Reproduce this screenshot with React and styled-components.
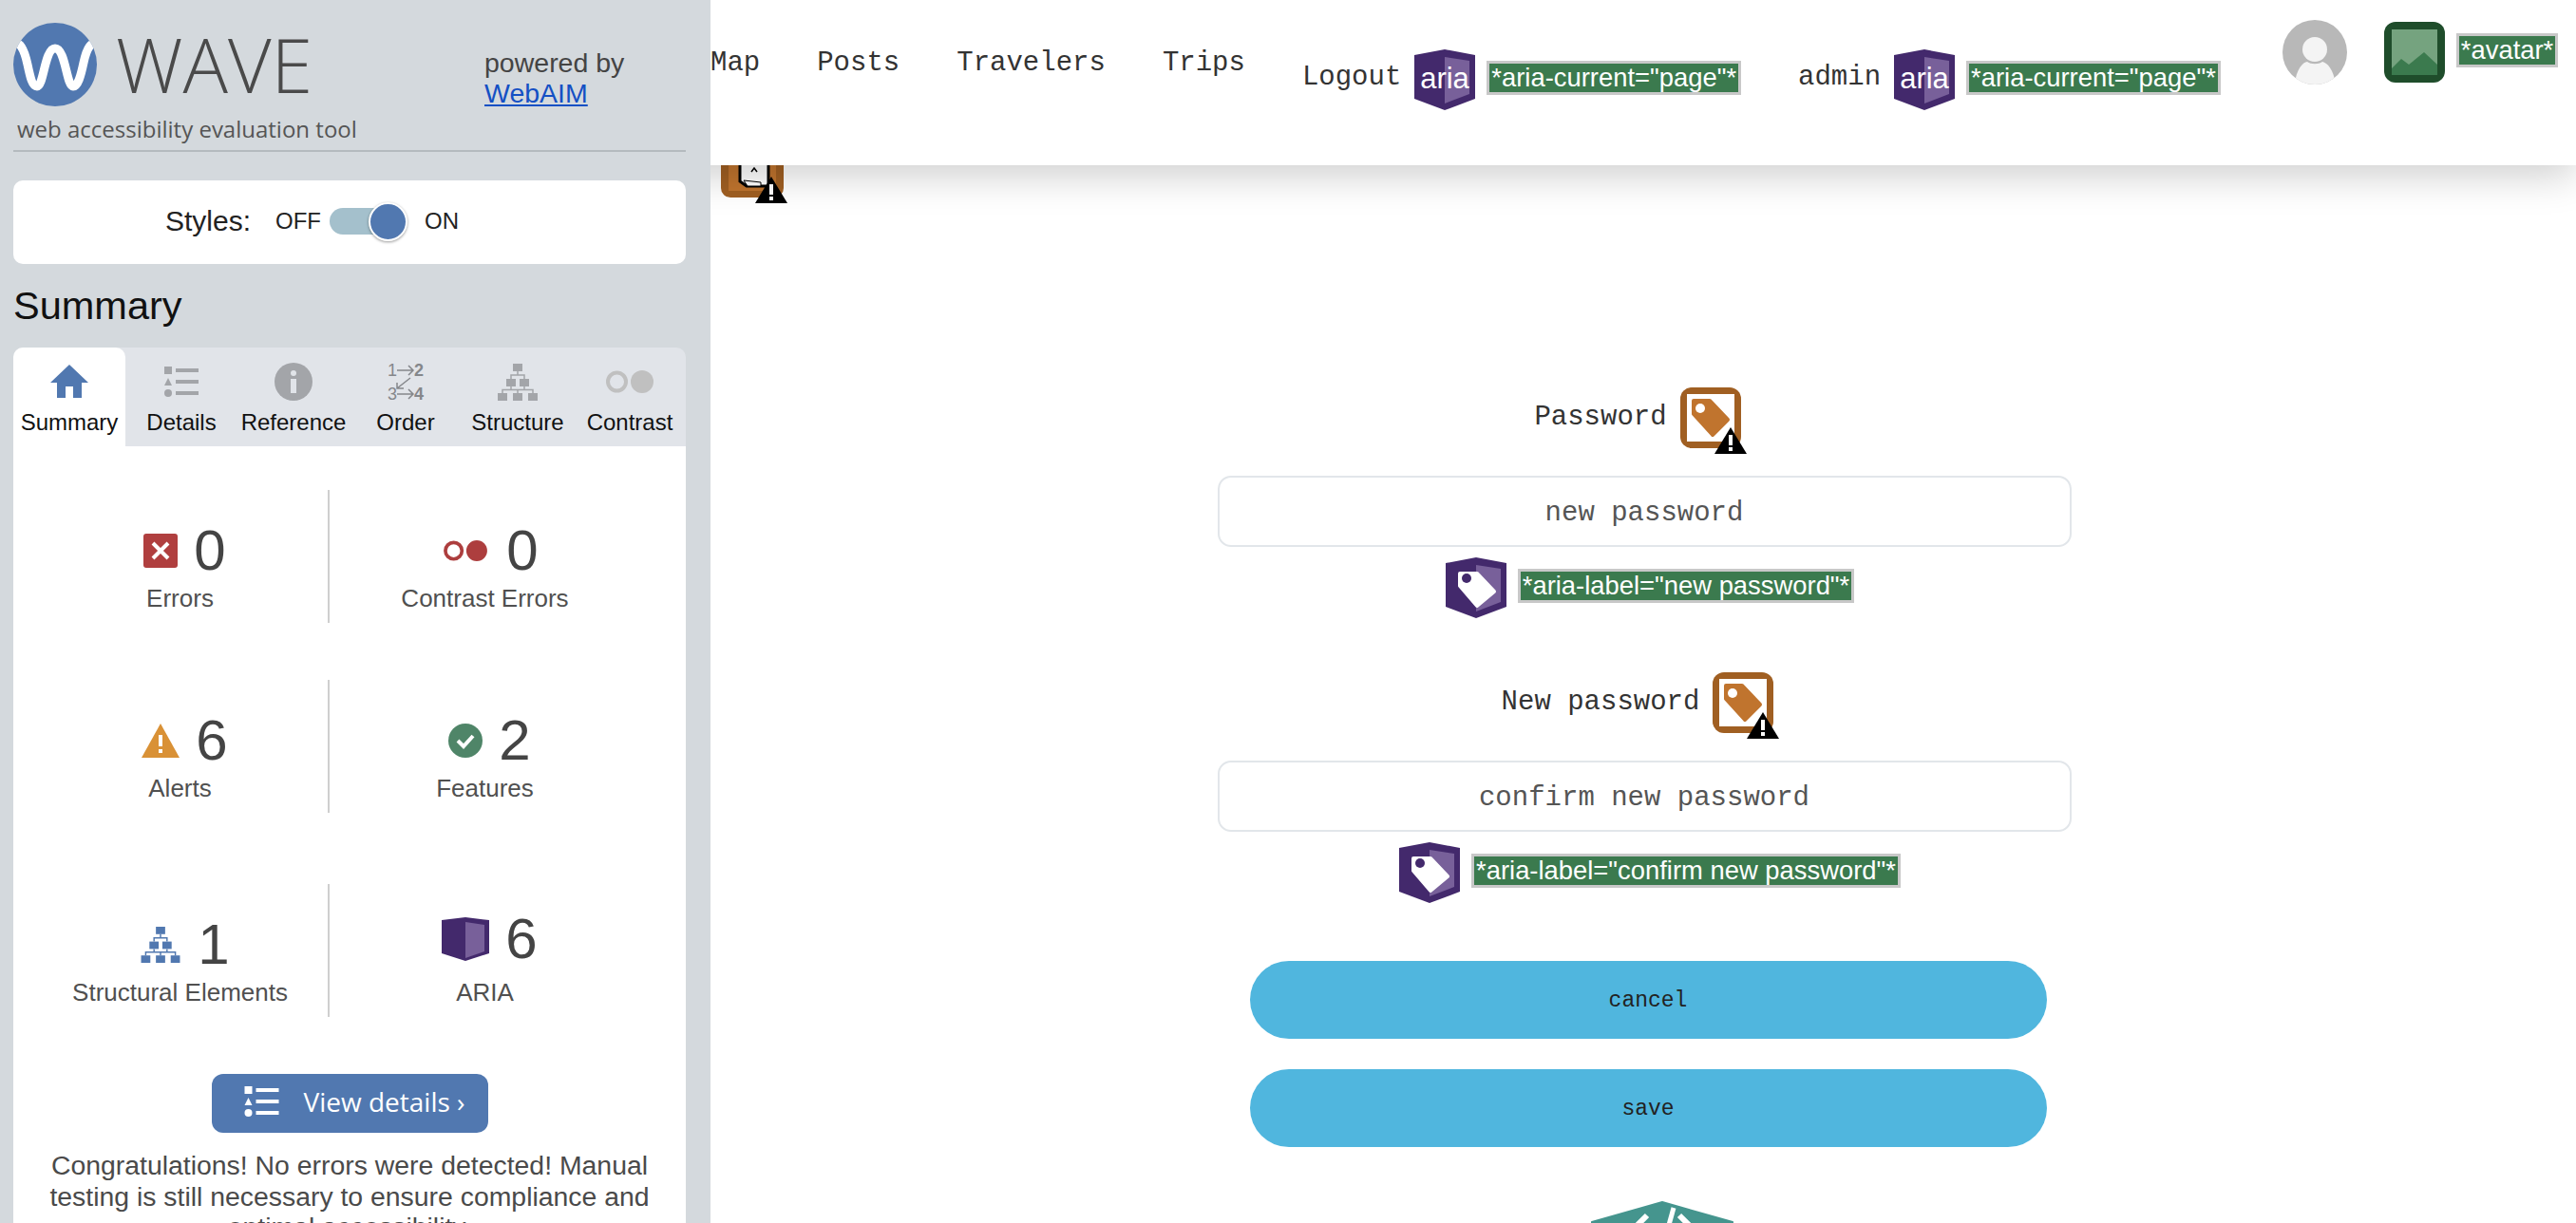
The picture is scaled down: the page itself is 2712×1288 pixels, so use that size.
import React from 'react';
import styled, { createGlobalStyle } from 'styled-components';

const GlobalStyle = createGlobalStyle`
  html, body { margin: 0; padding: 0; background: #fff; }
  * { box-sizing: border-box; }
`;

const Page = styled.div`
  display: flex;
  width: 100%;
  height: 1288px;
  overflow: hidden;
  font-family: "Liberation Sans", Arial, sans-serif;
`;

/* ---- sidebar ---- */
const Sidebar = styled.aside`
  position: relative;
  z-index: 2;
  flex: none;
  width: 748px;
  height: 100%;
  padding: 0 26px 0 14px;
  background: #d4d9dd;
  overflow: hidden;
`;

const Brand = styled.div`
  height: 160px;
  border-bottom: 2px solid #b4babe;
`;

const BrandTop = styled.div`
  display: flex;
  align-items: flex-start;
  height: 100px;
  padding-top: 24px;
`;

const WaveTitle = styled.div`
  width: 388px;
  margin-left: 20px;
  font-family: "Open Sans", sans-serif;
  font-weight: 300;
  font-size: 79px;
  line-height: 88px;
  color: #4a4a4a;
`;

const Powered = styled.div`
  font-size: 28.5px;
  line-height: 32px;
  padding-top: 26px;
  color: #444;
  a { color: #1450c4; display: block; }
`;

const Tagline = styled.div`
  margin: 0 0 0 4px;
  padding-top: 20px;
  font-family: "Open Sans", sans-serif;
  font-size: 24px;
  line-height: 32px;
  color: #555;
`;

const StylesCard = styled.div`
  display: flex;
  align-items: center;
  height: 88px;
  margin-top: 30px;
  padding: 0 0 2px 160px;
  background: #fff;
  border-radius: 10px;
  color: #222;
`;

const StylesLabel = styled.span`
  font-size: 30px;
  margin-right: 26px;
`;

const ToggleWord = styled.span`
  font-size: 24px;
`;

const Track = styled.div`
  position: relative;
  width: 74px;
  height: 28px;
  margin: 0 26px 0 9px;
  border-radius: 14px;
  background: #a4c0cc;
`;

const Knob = styled.div`
  position: absolute;
  top: -6px;
  left: 41px;
  width: 41px;
  height: 41px;
  border-radius: 50%;
  border: 2px solid #fff;
  background: #5178b0;
  box-shadow: 0 1px 3px rgba(0, 0, 0, 0.4);
`;

const Heading = styled.h2`
  display: flex;
  align-items: center;
  height: 88px;
  margin: 0;
  font-weight: 400;
  font-size: 41.5px;
  color: #111;
`;

const Tabs = styled.div`
  display: flex;
  height: 104px;
  background: #e1e4e9;
  border-radius: 10px 10px 0 0;
`;

const Tab = styled.div`
  flex: 1;
  display: flex;
  flex-direction: column;
  align-items: center;
  padding-top: 16px;
  background: ${p => (p.$active ? '#fff' : 'transparent')};
  border-radius: ${p => (p.$active ? '10px 10px 0 0' : '0')};
  color: ${p => (p.$active ? '#5178b0' : '#a3a5a9')};
`;

const TabIconSlot = styled.div`
  display: flex;
  align-items: center;
  justify-content: center;
  height: 40px;
`;

const TabLabel = styled.div`
  margin-top: 9px;
  font-size: 24px;
  line-height: 28px;
  color: #111;
`;

const Panel = styled.div`
  height: 818px;
  padding-top: 46px;
  background: #fff;
  color: #444;
`;

const StatRow = styled.div`
  display: grid;
  grid-template-columns: 313px 327px;
  margin: ${p => p.$top}px 0 0 20px;
`;

const Stat = styled.div`
  display: flex;
  flex-direction: column;
  align-items: center;
  height: 140px;
  padding-top: 34px;
  border-right: ${p => (p.$divided ? '2px solid #cfcfcf' : '0')};
`;

const StatHead = styled.div`
  display: flex;
  align-items: center;
  gap: 17px;
  height: 60px;
  padding: 0 0 ${p => (p.$raised ? '12px' : '0')} 10px;
  font-size: 60px;
  line-height: 60px;
`;

const StatLabel = styled.div`
  margin-top: 5px;
  font-size: 26px;
  line-height: 30px;
  color: #505050;
`;

const DetailsButton = styled.button`
  display: flex;
  align-items: center;
  justify-content: center;
  gap: 24px;
  width: 291px;
  height: 62px;
  margin: 60px 0 0 209px;
  padding: 0 0 4px 9px;
  border: 0;
  border-radius: 12px;
  background: #5178b0;
  color: #fff;
  font-family: "Open Sans", sans-serif;
  font-size: 28px;
`;

const Congrats = styled.p`
  margin: 18px 0 0;
  padding: 0 30px;
  text-align: center;
  font-size: 28.4px;
  line-height: 32.5px;
  color: #4a4a4a;
`;

/* ---- main column ---- */
const Main = styled.main`
  position: relative;
  flex: 1;
  min-width: 0;
  height: 100%;
  overflow: hidden;
  font-family: "Liberation Mono", "Courier New", monospace;
  color: #333;
`;

const TopBar = styled.header`
  position: absolute;
  top: 0;
  left: -60px;
  right: 0;
  z-index: 1;
  display: flex;
  align-items: flex-start;
  height: 174px;
  padding-left: 60px;
  background: #fff;
  box-shadow: 0 10px 40px rgba(0, 0, 0, 0.2);
`;

const NavLinks = styled.nav`
  display: flex;
  gap: 60px;
  margin: 49px 60px 0 0;
  font-size: 29px;
  line-height: 36px;
`;

const Annotated = styled.div`
  display: flex;
  align-items: flex-start;
  margin: 52px ${p => p.$after}px 0 0;
`;

const AccountText = styled.span`
  margin: 12px 14px 0 0;
  font-size: 29px;
  line-height: 36px;
`;

const Tag = styled.span`
  display: block;
  height: 36px;
  margin: 12px 0 0 12px;
  padding: 0 2px;
  border: 3px solid #c8c8c8;
  background: #3b7a4e;
  color: #fff;
  font-family: "Liberation Sans", Arial, sans-serif;
  font-size: 27.4px;
  line-height: 30px;
  white-space: nowrap;
`;

const AvatarSlot = styled.div`
  margin: 21px 39px 0 0;
`;

const AvatarTag = styled.div`
  display: flex;
  align-items: flex-start;
  margin-top: 23px;
`;

const Content = styled.div`
  display: flex;
  flex-direction: column;
  align-items: center;
  padding: 144px 0 0 2px;
`;

const StrayIcon = styled.div`
  align-self: flex-start;
  margin: 0 0 200px 9px;
  height: 64px;
`;

const FieldLabel = styled.label`
  display: flex;
  align-items: center;
  gap: 14px;
  height: 64px;
  padding-right: 14px;
  font-size: 29px;
  line-height: 60px;
`;

const Field = styled.input`
  display: block;
  width: 899px;
  height: 75px;
  margin-top: 29px;
  padding: 3px 0 0;
  border: 2px solid #e2e6ea;
  border-radius: 14px;
  background: #fff;
  outline: none;
  text-align: center;
  font-family: "Liberation Mono", "Courier New", monospace;
  font-size: 29px;
  color: #555;
  &::placeholder { color: #555; opacity: 1; }
`;

const AriaRow = styled.div`
  display: flex;
  align-items: flex-start;
  height: 65px;
  margin: 11px 0 ${p => p.$after}px;
  padding-left: 12px;
`;

const PillButton = styled.button`
  display: block;
  width: 839px;
  height: 82px;
  margin: 0 0 ${p => p.$after}px 8px;
  padding: 2px 0 0;
  border: 0;
  border-radius: 41px;
  background: #50b6de;
  color: #222;
  font-family: "Liberation Mono", "Courier New", monospace;
  font-size: 23px;
`;

const BadgeSlot = styled.div`
  margin-left: 38px;
`;

const Svg = styled.svg`
  display: block;
  flex: none;
  overflow: visible;
`;

const SvgText = styled.text`
  font-family: "Liberation Sans", Arial, sans-serif;
`;

/* ---- drawings ---- */
const WaveLogo = () => (
  <Svg width="88" height="88" viewBox="0 0 88 88">
    <clipPath id="wave-clip"><circle cx="44" cy="44" r="44" /></clipPath>
    <circle cx="44" cy="44" r="44" fill="#5178b0" />
    <path clipPath="url(#wave-clip)" d="M-2 26 C6 14 12 30 15 44 C18 58 20 67 25 67 C32 67 33 27 44 27 C55 27 56 67 63 67 C68 67 71 56 74 42 C77 28 82 16 92 24" fill="none" stroke="#fff" strokeWidth="9" />
  </Svg>
);

const HomeIcon = () => (
  <Svg width="40" height="36" viewBox="0 0 40 36">
    <path fill="currentColor" d="M20 0 L40 19 H33 V35 H24 V23 H16 V35 H7 V19 H0 Z" />
  </Svg>
);

const ListIcon = ({ width = 36, height = 33 }) => (
  <Svg width={width} height={height} viewBox="0 0 36 33" fill="currentColor">
    <rect x="0" y="0" width="8" height="8" />
    <rect x="12" y="2" width="24" height="4" />
    <path d="M4 12 L8 20 H0 Z" />
    <rect x="12" y="14" width="24" height="4" />
    <circle cx="4" cy="28" r="4" />
    <rect x="12" y="26" width="24" height="4" />
  </Svg>
);

const InfoIcon = () => (
  <Svg width="40" height="40" viewBox="0 0 40 40">
    <circle cx="20" cy="20" r="20" fill="currentColor" />
    <circle cx="20" cy="11" r="3" fill="#e1e4e9" />
    <rect x="17" y="17" width="6" height="15" fill="#e1e4e9" />
  </Svg>
);

const OrderIcon = () => (
  <Svg width="38" height="40" viewBox="0 0 38 40" fill="none" stroke="#85878b" strokeWidth="1.5">
    <SvgText x="0" y="14" fontSize="18" fill="#85878b" stroke="none">1</SvgText>
    <SvgText x="28" y="14" fontSize="18" fontWeight="700" fill="#85878b" stroke="none">2</SvgText>
    <SvgText x="0" y="39" fontSize="18" fill="#85878b" stroke="none">3</SvgText>
    <SvgText x="28" y="39" fontSize="18" fontWeight="700" fill="#85878b" stroke="none">4</SvgText>
    <path d="M10 8 H27 M22 3 L27 8 L22 13" />
    <path d="M10 33 H27 M22 28 L27 33 L22 38" />
    <path d="M24 16 L10 27 M10 21 V27 H17" />
  </Svg>
);

const TreeIcon = ({ width = 42, height = 39 }) => (
  <Svg width={width} height={height} viewBox="0 0 42 39">
    <g fill="currentColor">
      <rect x="16" y="0" width="10" height="8" />
      <rect x="9" y="16" width="10" height="8" />
      <rect x="23" y="16" width="10" height="8" />
      <rect x="0" y="31" width="10" height="8" />
      <rect x="16" y="31" width="10" height="8" />
      <rect x="32" y="31" width="10" height="8" />
    </g>
    <path d="M21 8 V12 M14 16 V12 H28 V16 M14 24 V28 M28 24 V28 M5 31 V27.5 H37 V31 M21 27.5 V31" fill="none" stroke="currentColor" strokeWidth="1.5" />
  </Svg>
);

const ContrastIcon = ({ width = 50, height = 24 }) => (
  <Svg width={width} height={height} viewBox="0 0 50 24">
    <circle cx="11.5" cy="12" r="9.5" fill="none" stroke="currentColor" strokeWidth="4" />
    <circle cx="38" cy="12" r="12" fill="currentColor" />
  </Svg>
);

const ErrorIcon = () => (
  <Svg width="36" height="36" viewBox="0 0 36 36">
    <rect width="36" height="36" rx="3" fill="#b03f3f" />
    <path d="M10 10 L26 26 M26 10 L10 26" stroke="#fff" strokeWidth="4" />
  </Svg>
);

const AlertIcon = () => (
  <Svg width="40" height="36" viewBox="0 0 40 36">
    <path d="M20 0 L40 36 H0 Z" fill="#d99136" />
    <rect x="18" y="12" width="4" height="12" fill="#fff" />
    <rect x="18" y="27" width="4" height="4" fill="#fff" />
  </Svg>
);

const FeatureIcon = () => (
  <Svg width="36" height="36" viewBox="0 0 36 36">
    <circle cx="18" cy="18" r="18" fill="#4f8568" />
    <path d="M10 18 L16 24 L26 13" fill="none" stroke="#fff" strokeWidth="4" />
  </Svg>
);

const AriaBox = () => (
  <Svg width="50" height="46" viewBox="0 0 50 46">
    <path d="M0 3 L25 0 L50 3 V38 L25 46 L0 38 Z" fill="#43296c" />
    <path d="M25 5 L45 8 V36 L25 43 Z" fill="#78609a" />
  </Svg>
);

const AriaShield = ({ children }) => (
  <Svg width="64" height="64" viewBox="0 0 64 64">
    <path d="M0 6 L32 0 L64 6 V52 L32 64 L0 52 Z" fill="#43296c" />
    <path d="M32 8 L58 12 V47 L32 57 Z" fill="#78609a" />
    {children}
  </Svg>
);

const AriaWord = () => (
  <AriaShield>
    <SvgText x="32" y="41" fontSize="31" fill="#fff" textAnchor="middle">aria</SvgText>
  </AriaShield>
);

const AriaTagIcon = () => (
  <AriaShield>
    <path d="M15 17 H33 L51 36 L33 51 L15 30 Z" fill="#fff" stroke="#fff" strokeWidth="4" strokeLinejoin="round" />
    <circle cx="22" cy="22" r="5" fill="#43296c" />
  </AriaShield>
);

const WarnMark = () => (
  <>
    <path d="M53 42 L70 70 H36 Z" fill="#000" />
    <rect x="51" y="50" width="4" height="11" fill="#fff" />
    <rect x="51" y="63" width="4" height="4" fill="#fff" />
  </>
);

const AlertTagIcon = () => (
  <Svg width="64" height="64" viewBox="0 0 64 64">
    <rect width="64" height="64" rx="12" fill="#a05f22" />
    <rect x="7" y="7" width="50" height="50" fill="#fff" />
    <path d="M14 14 H31 L50 34 L34 50 L14 28 Z" fill="#c0742e" stroke="#c0742e" strokeWidth="4" strokeLinejoin="round" />
    <circle cx="21" cy="22" r="5" fill="#fff" />
    <WarnMark />
  </Svg>
);

const AlertDocIcon = () => (
  <Svg width="64" height="64" viewBox="0 0 64 64">
    <rect width="66" height="64" rx="10" fill="#a05f22" />
    <rect x="8" y="7" width="50" height="50" fill="#c0742e" />
    <path d="M20 10 H50 V52 H27 L20 47 Z" fill="#fff" stroke="#000" strokeWidth="3" />
    <path d="M32 37 L35 33 L38 37" fill="none" stroke="#000" strokeWidth="1.5" />
    <path d="M24 46 L42 48 V52 H28 Z" fill="#fff" stroke="#000" strokeWidth="1" />
    <WarnMark />
  </Svg>
);

const Avatar = () => (
  <Svg width="68" height="68" viewBox="0 0 68 68">
    <clipPath id="avatar-clip"><circle cx="34" cy="34" r="34" /></clipPath>
    <circle cx="34" cy="34" r="34" fill="#b8b8b8" />
    <circle cx="34" cy="31" r="13" fill="#f4f4f4" />
    <path clipPath="url(#avatar-clip)" d="M13 68 C14 52 22 44 26 44 C30 47 38 47 42 44 C47 45 54 52 56 68 Z" fill="#f4f4f4" />
  </Svg>
);

const ImageIcon = () => (
  <Svg width="64" height="64" viewBox="0 0 64 64">
    <rect width="64" height="64" rx="12" fill="#1f4d2b" />
    <rect x="8" y="8" width="48" height="48" fill="#75a37f" />
    <path d="M8 49 L18 39 L26 45 L42 32 L56 45 V56 H8 Z" fill="#3b7a4e" />
  </Svg>
);

const CodeBadge = () => (
  <Svg width="148" height="80" viewBox="0 0 148 80">
    <path d="M74 0 L148 21 V120 H0 V21 Z" fill="#45958e" stroke="#45958e" strokeWidth="2" strokeLinejoin="round" />
    <path d="M86 6 L76 42" stroke="#fff" strokeWidth="5" fill="none" />
    <path d="M58 14 L38 34 L58 54 M92 14 L112 34 L92 54" stroke="#fff" strokeWidth="6" fill="none" />
  </Svg>
);

const tabs = [
  { label: 'Summary', icon: <HomeIcon />, active: true },
  { label: 'Details', icon: <ListIcon /> },
  { label: 'Reference', icon: <InfoIcon /> },
  { label: 'Order', icon: <OrderIcon /> },
  { label: 'Structure', icon: <TreeIcon /> },
  { label: 'Contrast', icon: <ContrastIcon /> },
];

const Red = styled.span`color: #ad3e3e; display: block;`;
const Blue = styled.span`color: #5178b0; display: block;`;
const Pale = styled.span`color: #c0c0c0; display: block;`;

const statRows = [
  {
    top: 0,
    cells: [
      { label: 'Errors', count: 0, icon: <ErrorIcon /> },
      { label: 'Contrast Errors', count: 0, icon: <Red><ContrastIcon width={52} height={22} /></Red> },
    ],
  },
  {
    top: 60,
    cells: [
      { label: 'Alerts', count: 6, icon: <AlertIcon /> },
      { label: 'Features', count: 2, icon: <FeatureIcon /> },
    ],
  },
  {
    top: 75,
    cells: [
      { label: 'Structural Elements', count: 1, icon: <Blue><TreeIcon width={44} height={38} /></Blue> },
      { label: 'ARIA', count: 6, icon: <AriaBox />, raised: true },
    ],
  },
];

const App = () => (
  <Page>
    <GlobalStyle />
    <Sidebar>
      <Brand>
        <BrandTop>
          <WaveLogo />
          <WaveTitle>WAVE</WaveTitle>
          <Powered>
            powered by
            <a href="#webaim">WebAIM</a>
          </Powered>
        </BrandTop>
        <Tagline>web accessibility evaluation tool</Tagline>
      </Brand>
      <StylesCard>
        <StylesLabel>Styles:</StylesLabel>
        <ToggleWord>OFF</ToggleWord>
        <Track><Knob /></Track>
        <ToggleWord>ON</ToggleWord>
      </StylesCard>
      <Heading>Summary</Heading>
      <Tabs>
        {tabs.map(t => (
          <Tab key={t.label} $active={t.active}>
            <TabIconSlot>
              {t.label === 'Contrast' ? <Pale>{t.icon}</Pale> : t.icon}
            </TabIconSlot>
            <TabLabel>{t.label}</TabLabel>
          </Tab>
        ))}
      </Tabs>
      <Panel>
        {statRows.map((row, i) => (
          <StatRow key={i} $top={row.top}>
            {row.cells.map((c, j) => (
              <Stat key={c.label} $divided={j === 0}>
                <StatHead $raised={c.raised}>
                  {c.icon}
                  <span>{c.count}</span>
                </StatHead>
                <StatLabel>{c.label}</StatLabel>
              </Stat>
            ))}
          </StatRow>
        ))}
        <DetailsButton>
          <ListIcon width={39} height={33} />
          <span>View details ›</span>
        </DetailsButton>
        <Congrats>
          Congratulations! No errors were detected! Manual testing is still necessary to ensure compliance and optimal accessibility.
        </Congrats>
      </Panel>
    </Sidebar>

    <Main>
      <TopBar>
        <NavLinks>
          <span>Map</span>
          <span>Posts</span>
          <span>Travelers</span>
          <span>Trips</span>
        </NavLinks>
        <Annotated $after={60}>
          <AccountText>Logout</AccountText>
          <AriaWord />
          <Tag>*aria-current="page"*</Tag>
        </Annotated>
        <Annotated $after={65}>
          <AccountText>admin</AccountText>
          <AriaWord />
          <Tag>*aria-current="page"*</Tag>
        </Annotated>
        <AvatarSlot><Avatar /></AvatarSlot>
        <AvatarTag>
          <ImageIcon />
          <Tag>*avatar*</Tag>
        </AvatarTag>
      </TopBar>

      <Content>
        <StrayIcon><AlertDocIcon /></StrayIcon>

        <FieldLabel>Password <AlertTagIcon /></FieldLabel>
        <Field placeholder="new password" />
        <AriaRow $after={56}>
          <AriaTagIcon />
          <Tag>*aria-label="new password"*</Tag>
        </AriaRow>

        <FieldLabel>New password <AlertTagIcon /></FieldLabel>
        <Field placeholder="confirm new password" />
        <AriaRow $after={60}>
          <AriaTagIcon />
          <Tag>*aria-label="confirm new password"*</Tag>
        </AriaRow>

        <PillButton $after={32}>cancel</PillButton>
        <PillButton $after={58}>save</PillButton>
        <BadgeSlot><CodeBadge /></BadgeSlot>
      </Content>
    </Main>
  </Page>
);

export default App;
